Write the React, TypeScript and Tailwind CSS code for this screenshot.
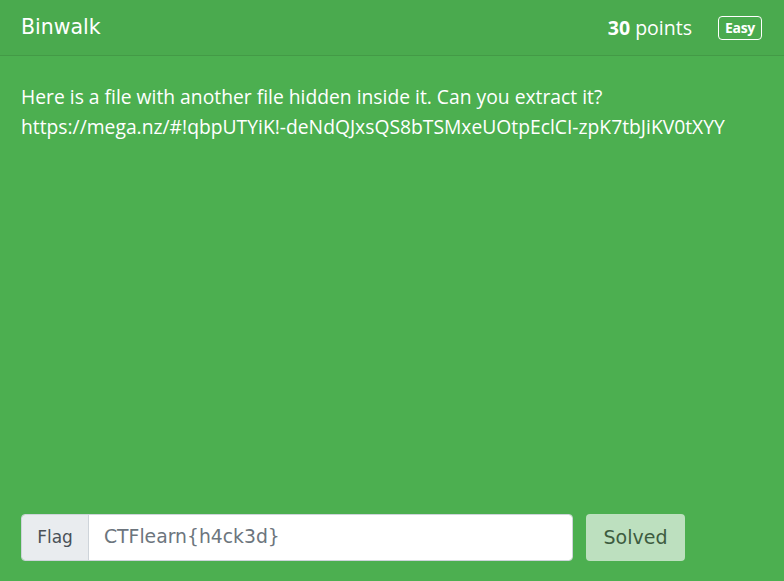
export default function App() {
  return (
    <div className="flex h-[581px] w-full flex-col bg-[#4caf50] text-white">
      {/* card header */}
      <div className="flex h-[56px] items-center justify-between border-b border-[#439a46] bg-[#4aaa4e] pl-[21px] pr-[22px]">
        <div className="font-['DejaVu_Sans',sans-serif] text-[20.5px]">Binwalk</div>
        <div className="flex items-center gap-[26px]">
          <div className="font-['Open_Sans',sans-serif] text-[19.5px]">
            <span className="font-bold">30</span> points
          </div>
          <span className="rounded-[4px] border border-white px-[6px] py-[1px] font-['Open_Sans',sans-serif] text-[14px] font-bold leading-[20px] tracking-[-0.3px]">
            Easy
          </span>
        </div>
      </div>

      {/* card body */}
      <div className="flex-1 px-[21px] pt-[26px] font-['Open_Sans',sans-serif] text-[19.3px] leading-[30px]">
        <p>Here is a file with another file hidden inside it. Can you extract it?</p>
        <p>https://mega.nz/#!qbpUTYiK!-deNdQJxsQS8bTSMxeUOtpEclCI-zpK7tbJiKV0tXYY</p>
      </div>

      {/* flag form */}
      <div className="flex gap-[13px] px-[21px] pb-[20px]">
        <div className="flex h-[47px] w-[552px] overflow-hidden rounded-[4px] border border-[#ced4da] font-['DejaVu_Sans',sans-serif]">
          <div className="flex w-[67px] items-center justify-center border-r border-[#ced4da] bg-[#e9ecef] text-[17px] text-[#495057]">
            Flag
          </div>
          <input
            className="flex-1 bg-white px-[15px] text-[18.8px] text-[#6c757d] outline-none"
            defaultValue="CTFlearn{h4ck3d}"
            readOnly
          />
        </div>
        <button className="h-[47px] w-[99px] rounded-[4px] bg-[#bde0bf] font-['DejaVu_Sans',sans-serif] text-[19px] text-[#3d5c3f]">
          Solved
        </button>
      </div>
    </div>
  );
}
